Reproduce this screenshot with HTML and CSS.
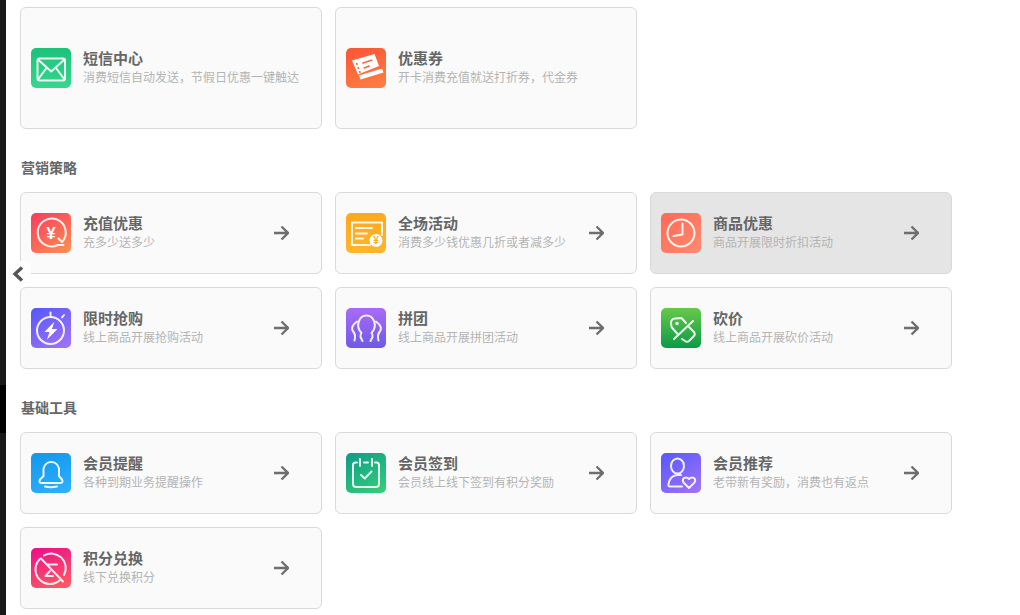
FILE: index.html
```html
<!DOCTYPE html>
<html lang="zh-CN">
<head>
  <meta charset="UTF-8">
  <title>营销中心</title>
  <link rel="stylesheet" href="styles.css">
</head>
<body>
  <div class="strip">
    <div class="strip-top"></div>
    <div class="strip-mid"></div>
    <div class="strip-bottom"></div>
  </div>

  <div class="collapse">
    <svg width="12" height="16" viewBox="0 0 12 16"><path class="chevron" d="M10 1.5 L3 8 L10 14.5"/></svg>
  </div>

  <main class="main">
    <section class="grid tall">
      <div class="card">
        <div class="icon mail">
          <svg viewBox="0 0 40 40"><rect class="line" x="6.5" y="10.5" width="27.5" height="22" rx="2"/><path class="line" d="M7 11.5 L20.2 23.5 L33.5 11.5 M7 31.5 L15.5 20 M33.5 31.5 L25 20"/></svg>
        </div>
        <div class="text">
          <div class="title">短信中心</div>
          <div class="sub">消费短信自动发送，节假日优惠一键触达</div>
        </div>
      </div>
      <div class="card">
        <div class="icon coupon">
          <svg viewBox="0 0 40 40">
            <path class="solid" d="M13 27.5 L36 20.5 L37.5 24.5 L14.5 31.5 Z"/>
            <path class="solid" d="M6 12.5 L28.5 6 L33 18 L12 26.5 Z"/>
            <path class="cut" d="M10.5 15 L11.2 17 M12 19 L12.7 21 M13.5 23 L14.2 25 M16.3 15.3 L26.3 12 M17.7 20.3 L23.7 17.7"/>
          </svg>
        </div>
        <div class="text">
          <div class="title">优惠券</div>
          <div class="sub">开卡消费充值就送打折券，代金券</div>
        </div>
      </div>
    </section>

    <h2 class="heading">营销策略</h2>
    <section class="grid">
      <div class="card">
        <div class="icon recharge">
          <svg viewBox="0 0 40 40"><path class="line" d="M27 32 H32.5 M27 32 A14 14 0 1 1 31 29 L27.5 25.5"/><text class="yen" x="20" y="26">¥</text></svg>
        </div>
        <div class="text">
          <div class="title">充值优惠</div>
          <div class="sub">充多少送多少</div>
        </div>
        <svg class="arrow" viewBox="0 0 16 16"><path d="M1 8 H14.5 M8.5 1.5 L15 8 L8.5 14.5"/></svg>
      </div>
      <div class="card">
        <div class="icon activity">
          <svg viewBox="0 0 40 40"><path class="line" d="M36 22 V9.5 H6 V32 H24"/><path class="line" d="M10 15 H26 M10 20.5 H21 M10 25.5 H17"/><circle class="solid" cx="30" cy="27.5" r="6.5"/><text class="yen small" x="30" y="31">¥</text></svg>
        </div>
        <div class="text">
          <div class="title">全场活动</div>
          <div class="sub">消费多少钱优惠几折或者减多少</div>
        </div>
        <svg class="arrow" viewBox="0 0 16 16"><path d="M1 8 H14.5 M8.5 1.5 L15 8 L8.5 14.5"/></svg>
      </div>
      <div class="card active">
        <div class="icon goods">
          <svg viewBox="0 0 40 40"><circle class="line" cx="20" cy="20" r="13.5"/><path class="line" d="M21.5 10.5 V21.5 L12.5 23"/></svg>
        </div>
        <div class="text">
          <div class="title">商品优惠</div>
          <div class="sub">商品开展限时折扣活动</div>
        </div>
        <svg class="arrow" viewBox="0 0 16 16"><path d="M1 8 H14.5 M8.5 1.5 L15 8 L8.5 14.5"/></svg>
      </div>
      <div class="card">
        <div class="icon flash">
          <svg viewBox="0 0 40 40"><circle class="line" cx="19.5" cy="22.5" r="13.5"/><path class="line" d="M19.5 4.5 V9 M31 9.5 L33 7"/><path class="solid" d="M23.5 13.5 L13.5 24 H18.5 L16 31.5 L26.5 21 H21 Z"/></svg>
        </div>
        <div class="text">
          <div class="title">限时抢购</div>
          <div class="sub">线上商品开展抢购活动</div>
        </div>
        <svg class="arrow" viewBox="0 0 16 16"><path d="M1 8 H14.5 M8.5 1.5 L15 8 L8.5 14.5"/></svg>
      </div>
      <div class="card">
        <div class="icon group">
          <svg viewBox="0 0 40 40"><path class="line" d="M16.5 33 L14.5 29 Q14 26.5 15.5 25 C9 18 13 7.5 20.5 7.5 C28 7.5 32 18 25.5 25 Q27 26.5 26.5 29 L24.5 33"/><path class="line" d="M11 13.5 C5.5 17.5 5 21 7.5 24 Q10 27 8.5 32.5 M30 13.5 C35.5 17.5 36 21 33.5 24 Q31 27 32.5 32.5"/></svg>
        </div>
        <div class="text">
          <div class="title">拼团</div>
          <div class="sub">线上商品开展拼团活动</div>
        </div>
        <svg class="arrow" viewBox="0 0 16 16"><path d="M1 8 H14.5 M8.5 1.5 L15 8 L8.5 14.5"/></svg>
      </div>
      <div class="card">
        <div class="icon bargain">
          <svg viewBox="0 0 40 40"><path class="line" d="M25 15 L20.5 10 L14 10.5 Q10 11 10 15 L10.5 19 L16.5 26 M32 13 L13 31 M28 19 L33 24 Q34.5 26 33 28 L28 33 Q26 34.5 24 33 L21 31"/><circle class="line" cx="16" cy="15.5" r="0.8"/></svg>
        </div>
        <div class="text">
          <div class="title">砍价</div>
          <div class="sub">线上商品开展砍价活动</div>
        </div>
        <svg class="arrow" viewBox="0 0 16 16"><path d="M1 8 H14.5 M8.5 1.5 L15 8 L8.5 14.5"/></svg>
      </div>
    </section>

    <h2 class="heading">基础工具</h2>
    <section class="grid">
      <div class="card">
        <div class="icon bell">
          <svg viewBox="0 0 40 40"><path class="line" d="M12.5 23 V15.5 A8 8.5 0 0 1 28 15.5 V23 L31 26.5 Q32.5 30 29.5 30 H10.5 Q7.5 30 9 26.5 Z"/><path class="line" d="M14 33.5 Q20 35 26 33.5"/></svg>
        </div>
        <div class="text">
          <div class="title">会员提醒</div>
          <div class="sub">各种到期业务提醒操作</div>
        </div>
        <svg class="arrow" viewBox="0 0 16 16"><path d="M1 8 H14.5 M8.5 1.5 L15 8 L8.5 14.5"/></svg>
      </div>
      <div class="card">
        <div class="icon signin">
          <svg viewBox="0 0 40 40"><path class="line" d="M11 9.5 H9.5 Q7 9.5 7 12 V31 Q7 34 10 34 H30 Q33 34 33 31 V12 Q33 9.5 30.5 9.5 H29 M18 9.5 H22 M14 6 V13 M26 6 V13"/><path class="line" d="M15 22 L18.8 25.5 L25.5 18.5"/></svg>
        </div>
        <div class="text">
          <div class="title">会员签到</div>
          <div class="sub">会员线上线下签到有积分奖励</div>
        </div>
        <svg class="arrow" viewBox="0 0 16 16"><path d="M1 8 H14.5 M8.5 1.5 L15 8 L8.5 14.5"/></svg>
      </div>
      <div class="card">
        <div class="icon refer">
          <svg viewBox="0 0 40 40"><ellipse class="line" cx="16.5" cy="13" rx="6.5" ry="7.5"/><path class="line" d="M21 33.5 H9 Q7 33.5 7.5 31 C8.5 25 12 22.5 16 22 H20"/><path class="line" d="M28 35 L22.5 29.5 C20 26 24.5 22.5 28 26 C31.5 22.5 36 26 33.5 29.5 Z"/></svg>
        </div>
        <div class="text">
          <div class="title">会员推荐</div>
          <div class="sub">老带新有奖励，消费也有返点</div>
        </div>
        <svg class="arrow" viewBox="0 0 16 16"><path d="M1 8 H14.5 M8.5 1.5 L15 8 L8.5 14.5"/></svg>
      </div>
      <div class="card">
        <div class="icon points">
          <svg viewBox="0 0 40 40"><path class="line" d="M29 32 A14.5 14.5 0 0 1 9 11 M13 7.5 A14.5 14.5 0 0 1 33 27"/><path class="line" d="M10 10.5 L32 33.5 M17 16.5 H26 M22 28 H14.5 L19 23"/></svg>
        </div>
        <div class="text">
          <div class="title">积分兑换</div>
          <div class="sub">线下兑换积分</div>
        </div>
        <svg class="arrow" viewBox="0 0 16 16"><path d="M1 8 H14.5 M8.5 1.5 L15 8 L8.5 14.5"/></svg>
      </div>
    </section>
  </main>
</body>
</html>
```

FILE: styles.css
```css
html, body {
  height: 100%;
}
body {
  margin: 0;
  display: flex;
  overflow: hidden;
  background-color: #fff;
  font-family: "Noto Sans CJK SC", "Noto Sans", sans-serif;
}
.strip {
  width: 6px;
  flex-shrink: 0;
  display: flex;
  flex-direction: column;
}
.strip-top {
  height: 385px;
  background-color: #191919;
}
.strip-mid {
  height: 48px;
  background-color: #000;
}
.strip-bottom {
  flex: 1;
  background-color: #191919;
}
.collapse {
  position: absolute;
  left: 10px;
  top: 261px;
  width: 21px;
  height: 26px;
  border-radius: 0 6px 6px 0;
  background-color: #fff;
  display: flex;
  align-items: center;
  padding-left: 2px;
  box-sizing: border-box;
}
.chevron {
  fill: none;
  stroke: #555;
  stroke-width: 3.4;
}
.main {
  flex: 1;
  padding: 7px 0 0 14px;
}
.grid {
  display: grid;
  grid-template-columns: repeat(3, 302px);
  gap: 13px;
}
.heading {
  margin: 0;
  padding: 28px 0 15px 1px;
  font-size: 14px;
  line-height: 20px;
  font-weight: bold;
  color: #666;
}
.card {
  height: 82px;
  box-sizing: border-box;
  display: flex;
  align-items: center;
  padding: 0 32px 0 10px;
  background-color: #fafafa;
  border: 1px solid #d9d9d9;
  border-radius: 6px;
}
.tall .card {
  height: 122px;
}
.card.active {
  background-color: #e5e5e5;
}
.text {
  margin-left: 12px;
  flex: 1;
  white-space: nowrap;
}
.title {
  margin: -1px 0 1px;
  font-size: 15px;
  line-height: 18px;
  font-weight: bold;
  color: #666;
}
.sub {
  font-size: 12px;
  line-height: 18px;
  color: #b4b4b4;
}
.arrow {
  width: 16px;
  height: 16px;
  fill: none;
  stroke: #6e6e6e;
  stroke-width: 2.3;
}
.icon {
  width: 40px;
  height: 40px;
  flex-shrink: 0;
  border-radius: 5px;
}
.icon svg {
  display: block;
  width: 40px;
  height: 40px;
}
.line {
  fill: none;
  stroke: #fff;
  stroke-width: 2;
  stroke-linecap: round;
  stroke-linejoin: round;
  opacity: 0.9;
}
.solid {
  fill: #fff;
}
.cut {
  fill: none;
  stroke: #fb6a3e;
  stroke-width: 1.6;
}
.yen {
  fill: #fff;
  font-family: "Liberation Sans", sans-serif;
  font-size: 17px;
  font-weight: bold;
  text-anchor: middle;
}
.yen.small {
  fill: #ffae24;
  font-size: 10px;
}
.mail { background: linear-gradient(180deg, #1cc27a, #36d68d); }
.coupon { background: linear-gradient(160deg, #fb5436, #ff8143); }
.recharge { background: linear-gradient(145deg, #f83a5f, #ff9050); }
.activity { background: linear-gradient(180deg, #ffa81f, #ffb52a); }
.goods { background: linear-gradient(135deg, #ff6a55, #ff8a70); }
.flash { background: linear-gradient(145deg, #5558fa, #a374f8); }
.group { background: linear-gradient(180deg, #a96bf6, #6d5ae8); }
.bargain { background: linear-gradient(180deg, #66c94a, #0c9a47); }
.bell { background: linear-gradient(160deg, #1297ea, #2fb0ff); }
.signin { background: linear-gradient(150deg, #109a88, #33d177); }
.refer { background: linear-gradient(145deg, #5558fa, #a374f8); }
.points { background: linear-gradient(160deg, #ea0c8a, #ff6060); }
```
